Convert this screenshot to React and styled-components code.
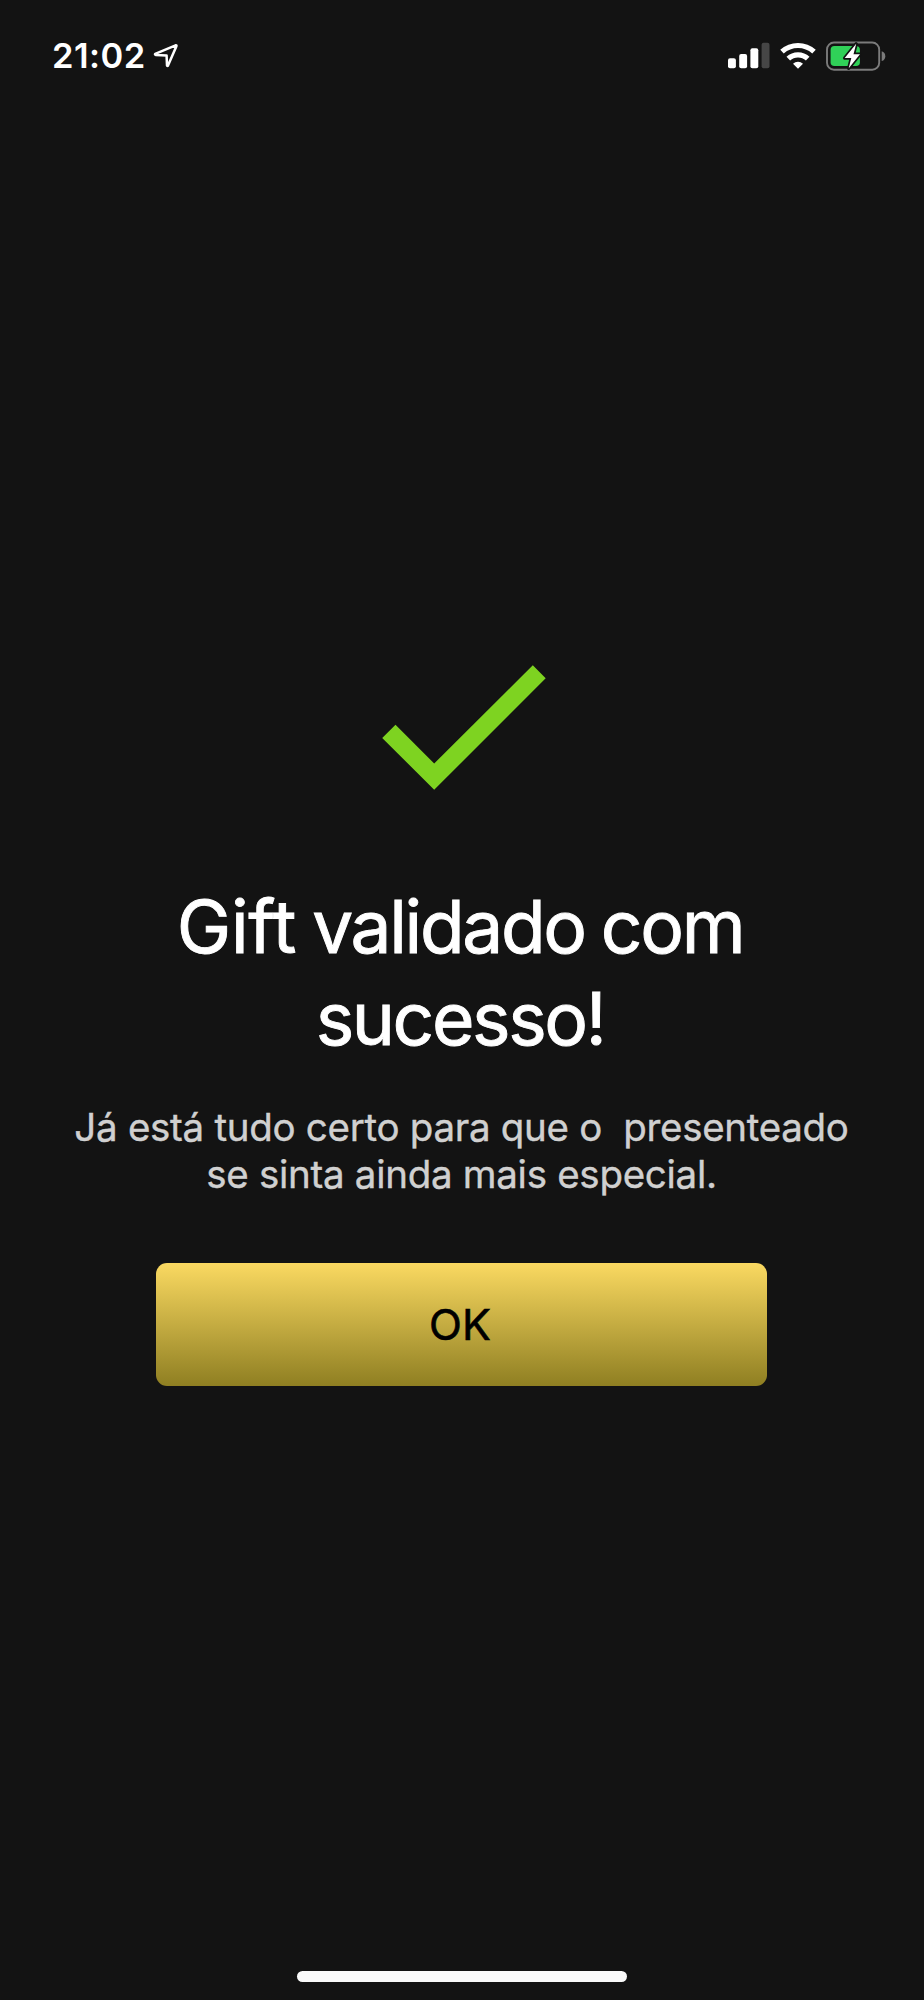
import React from 'react';
import styled, { createGlobalStyle } from 'styled-components';

const GlobalStyle = createGlobalStyle`
  * {
    box-sizing: border-box;
  }

  body {
    margin: 0;
    background-color: #131313;
    font-family: Inter, 'Liberation Sans', sans-serif;
  }
`;

const Screen = styled.div`
  display: flex;
  flex-direction: column;
  align-items: center;
  width: 924px;
  height: 2000px;
  background-color: #131313;
  color: #fff;
  overflow: hidden;
`;

const StatusBar = styled.header`
  display: flex;
  justify-content: space-between;
  align-items: center;
  width: 100%;
  height: 111px;
  padding: 0 38px 0 52px;

  .status-left,
  .status-right {
    display: flex;
    align-items: center;
  }

  .status-left {
    gap: 7px;
  }

  .status-right {
    gap: 10px;
  }
`;

const Clock = styled.span`
  font-size: 34.5px;
  font-weight: 600;
  line-height: 42px;
  letter-spacing: 0.5px;
`;

const Icon = styled.svg`
  display: block;
  flex: none;
`;

const Content = styled.main`
  display: flex;
  flex: 1;
  flex-direction: column;
  align-items: center;
  width: 100%;
  padding: 554px 1px 0 0;

  > svg {
    margin-left: 4px;
  }
`;

const Title = styled.h1`
  margin: 91px 3px 0 0;
  font-size: 73px;
  font-weight: 400;
  line-height: 92px;
  letter-spacing: -2.35px;
  word-spacing: -2px;
  text-align: center;
  -webkit-text-stroke: 0.9px #fff;
`;

const Word = styled.span`
  letter-spacing: ${({ $spacing }) => $spacing};
`;

const Message = styled.p`
  margin: 39px 0 0;
  color: #d0d0d0;
  font-size: 38.5px;
  line-height: 46.7px;
  letter-spacing: -0.29px;
  text-align: center;
  white-space: pre;
  -webkit-text-stroke: 0.4px #d0d0d0;
`;

const Button = styled.button`
  width: 611px;
  height: 123px;
  margin-top: 66px;
  padding: 0 3px 1px 0;
  border: 0;
  border-radius: 11px;
  background: linear-gradient(#fad961, #8f7f22);
  color: #000;
  font-family: inherit;
  font-size: 43px;
  letter-spacing: 0;
  -webkit-text-stroke: 0.6px #000;
`;

const HomeIndicator = styled.div`
  width: 330px;
  height: 11px;
  margin-bottom: 18px;
  border-radius: 6px;
  background-color: #fafafa;
`;

const LocationIcon = () => (
  <Icon width="26" height="26" viewBox="153 43 26 26">
    <path
      d="M155.2 53.8 L175.6 45.3 Q176.8 45 176.4 46.2 L168 65.6 Q167.3 66.4 167 65.3 L166.6 55.6 L155.6 54.9 Q154.6 54.5 155.2 53.8 Z"
      fill="none"
      stroke="#fff"
      strokeWidth="2.5"
      strokeLinejoin="round"
    />
  </Icon>
);

const bars = [
  { x: 0, height: 10 },
  { x: 11.2, height: 14.4 },
  { x: 22.4, height: 20 },
  { x: 33.6, height: 25.6, dim: true },
];

const SignalIcon = () => (
  <Icon width="42" height="27" viewBox="0 0 42 27">
    {bars.map((bar) => (
      <rect
        key={bar.x}
        x={bar.x}
        y={26.3 - bar.height}
        width="7.9"
        height={bar.height}
        rx="2"
        fill={bar.dim ? '#464646' : '#fff'}
      />
    ))}
  </Icon>
);

const WifiIcon = () => (
  <Icon width="36" height="27" viewBox="-18 -27 36 27">
    <g fill="none" stroke="#fff" strokeWidth="5.2">
      <path d="M-16 -17.3 A23.8 23.8 0 0 1 16 -17.3" />
      <path d="M-9.7 -10.3 A14 14 0 0 1 9.7 -10.3" />
    </g>
    <path d="M0 -0.2 L-5 -5.3 A7.3 7.3 0 0 1 5 -5.3 Z" fill="#fff" />
  </Icon>
);

const BatteryIcon = () => (
  <Icon width="60" height="30" viewBox="826 40.5 60 30">
    <rect x="827" y="42" width="52.2" height="27.2" rx="7" fill="none" stroke="#7b7b7b" strokeWidth="1.9" />
    <path d="M881.7 50.8 Q885.3 52 885.3 55.7 Q885.3 59.4 881.7 60.6 Z" fill="#7b7b7b" />
    <rect x="830.6" y="45.6" width="29.3" height="20" rx="3.8" fill="#30d158" />
    <path
      d="M856.2 43.3 L844.7 57.6 H851.3 L848.7 67.8 L860 53.8 H853.5 Z"
      fill="#fff"
      stroke="#131313"
      strokeWidth="3.4"
      strokeLinejoin="round"
      paintOrder="stroke"
    />
  </Icon>
);

const CheckIcon = () => (
  <Icon width="164" height="125" viewBox="381.5 665.5 164 125">
    <path d="M395 725.3 L433.7 764 L532.3 665.7 L545.2 678.8 L433.7 790.3 L381.7 738.4 Z" fill="#7ed321" />
  </Icon>
);

const App = () => (
  <>
    <GlobalStyle />
    <Screen>
      <StatusBar>
        <div className="status-left">
          <Clock>21:02</Clock>
          <LocationIcon />
        </div>
        <div className="status-right">
          <SignalIcon />
          <WifiIcon />
          <BatteryIcon />
        </div>
      </StatusBar>
      <Content>
        <CheckIcon />
        <Title>
          <Word $spacing="-0.3px">Gift</Word> validado com
          <br />
          <Word $spacing="-2.4px">sucesso!</Word>
        </Title>
        <Message>{'Já está tudo certo para que o  presenteado\nse sinta ainda mais especial.'}</Message>
        <Button type="button">OK</Button>
      </Content>
      <HomeIndicator />
    </Screen>
  </>
);

export default App;
